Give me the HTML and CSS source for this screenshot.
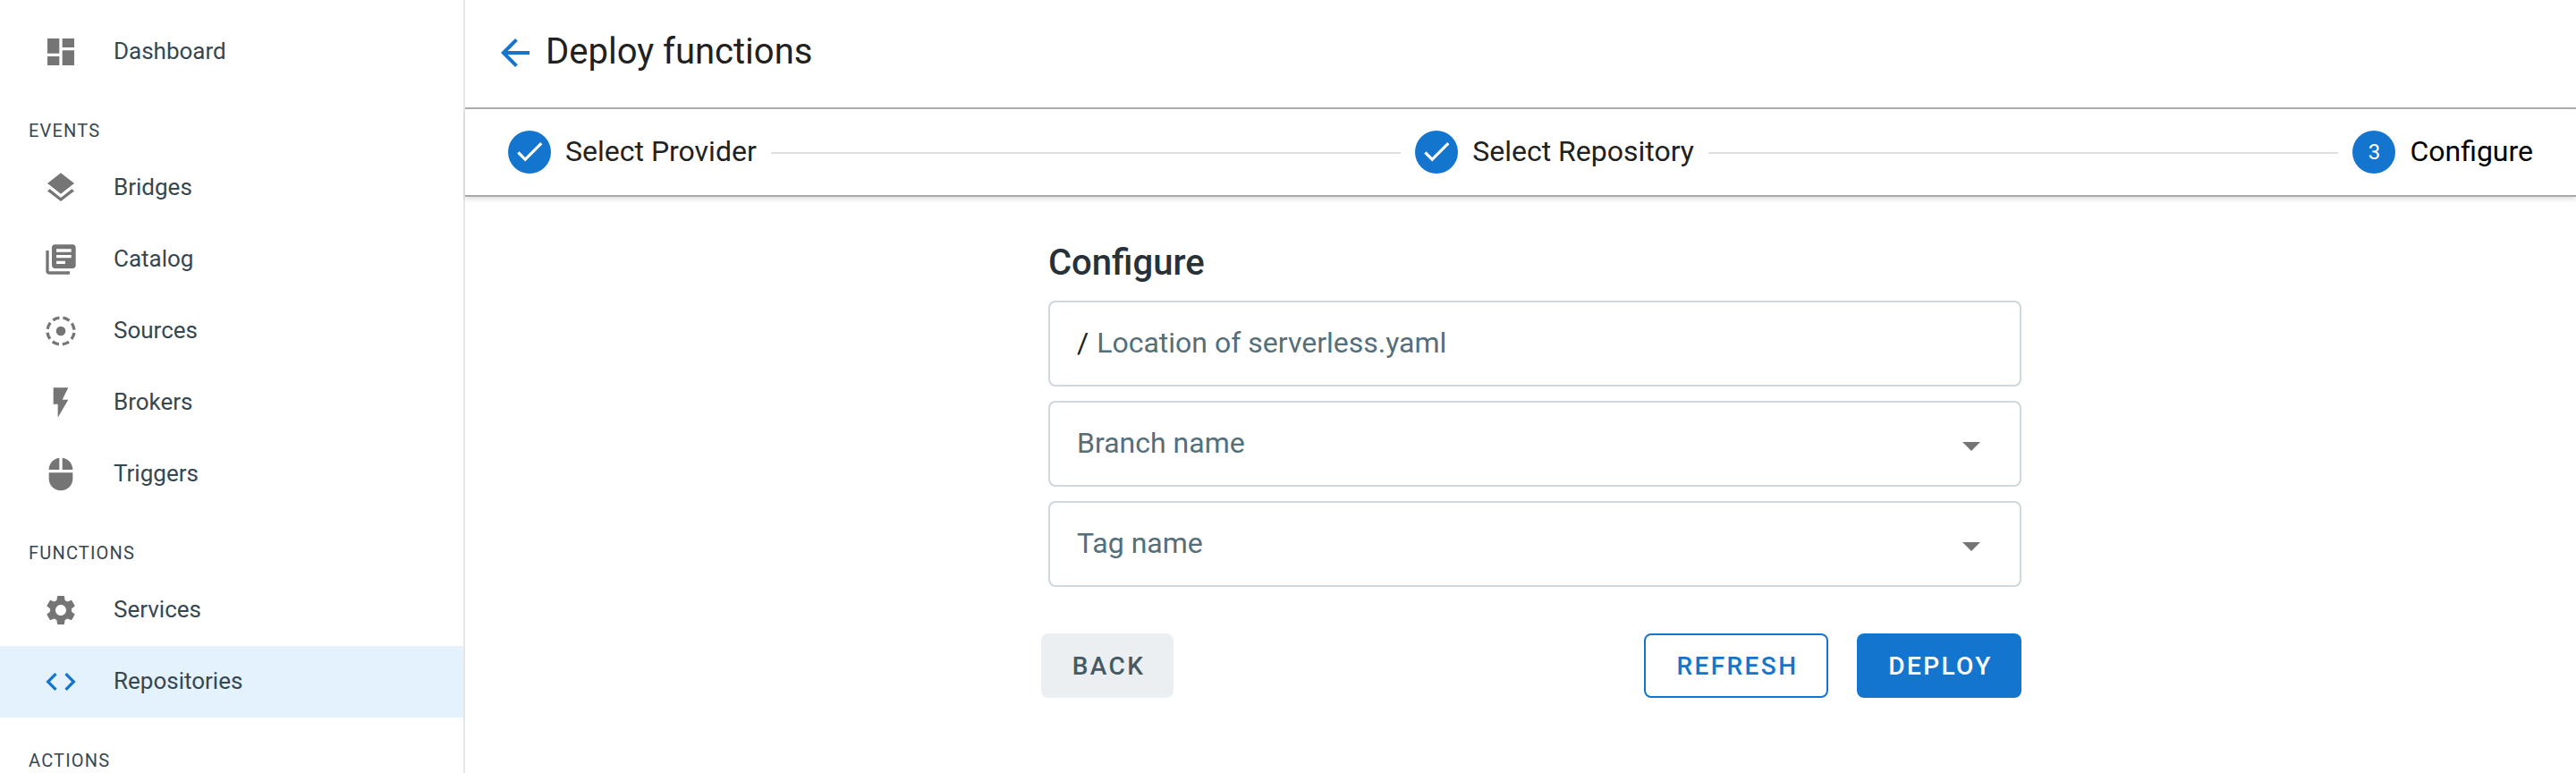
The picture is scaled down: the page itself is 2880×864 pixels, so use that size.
FILE: index.html
```html
<!DOCTYPE html>
<html lang="en">
<head>
  <meta charset="UTF-8">
  <title>Deploy functions</title>
  <link rel="stylesheet" href="styles.css">
</head>
<body>
  <aside class="sidebar">
    <nav>
      <a class="nav-item">
        <svg class="nav-icon" viewBox="0 0 24 24"><path d="M3 13h8V3H3v10zm0 8h8v-6H3v6zm10 0h8V11h-8v10zm0-18v6h8V3h-8z"/></svg>
        <span>Dashboard</span>
      </a>
      <div class="nav-heading">EVENTS</div>
      <a class="nav-item">
        <svg class="nav-icon" viewBox="0 0 24 24"><path d="M11.99 18.54l-7.37-5.73L3 14.07l9 7 9-7-1.63-1.27-7.38 5.74zM12 16l7.36-5.73L21 9l-9-7-9 7 1.63 1.27L12 16z"/></svg>
        <span>Bridges</span>
      </a>
      <a class="nav-item">
        <svg class="nav-icon" viewBox="0 0 24 24"><path d="M4 6H2v14c0 1.1.9 2 2 2h14v-2H4V6zm16-4H8c-1.1 0-2 .9-2 2v12c0 1.1.9 2 2 2h12c1.1 0 2-.9 2-2V4c0-1.1-.9-2-2-2zm-1 9H9V9h10v2zm-4 4H9v-2h6v2zm4-8H9V5h10v2z"/></svg>
        <span>Catalog</span>
      </a>
      <a class="nav-item">
        <svg class="nav-icon" viewBox="0 0 24 24"><circle class="dashed" cx="12" cy="12" r="9"/><circle cx="12" cy="12" r="3.2"/></svg>
        <span>Sources</span>
      </a>
      <a class="nav-item">
        <svg class="nav-icon" viewBox="0 0 24 24"><path d="M7 2v11h3v9l7-12h-4l4-8z"/></svg>
        <span>Brokers</span>
      </a>
      <a class="nav-item">
        <svg class="nav-icon" viewBox="0 0 24 24"><path d="M13 1.07V9h7c0-4.08-3.05-7.44-7-7.93zM4 15c0 4.42 3.58 8 8 8s8-3.58 8-8v-4H4v4zm7-13.93C7.05 1.56 4 4.92 4 9h7V1.07z"/></svg>
        <span>Triggers</span>
      </a>
      <div class="nav-heading">FUNCTIONS</div>
      <a class="nav-item">
        <svg class="nav-icon" viewBox="0 0 24 24"><path d="M19.14 12.94c.04-.3.06-.61.06-.94 0-.32-.02-.64-.07-.94l2.03-1.58c.18-.14.23-.41.12-.61l-1.92-3.32c-.12-.22-.37-.29-.59-.22l-2.39.96c-.5-.38-1.03-.7-1.62-.94l-.36-2.54c-.04-.24-.24-.41-.48-.41h-3.84c-.24 0-.43.17-.47.41l-.36 2.54c-.59.24-1.13.57-1.62.94l-2.39-.96c-.22-.08-.47 0-.59.22L2.74 8.87c-.12.21-.08.47.12.61l2.03 1.58c-.05.3-.09.63-.09.94s.02.64.07.94l-2.03 1.58c-.18.14-.23.41-.12.61l1.92 3.32c.12.22.37.29.59.22l2.39-.96c.5.38 1.03.7 1.62.94l.36 2.54c.05.24.24.41.48.41h3.84c.24 0 .44-.17.47-.41l.36-2.54c.59-.24 1.13-.56 1.62-.94l2.39.96c.22.08.47 0 .59-.22l1.92-3.32c.12-.22.07-.47-.12-.61l-2.01-1.58zM12 15.6c-1.98 0-3.6-1.62-3.6-3.6s1.62-3.6 3.6-3.6 3.6 1.62 3.6 3.6-1.62 3.6-3.6 3.6z"/></svg>
        <span>Services</span>
      </a>
      <a class="nav-item active">
        <svg class="nav-icon" viewBox="0 0 24 24"><path d="M9.4 16.6L4.8 12l4.6-4.6L8 6l-6 6 6 6 1.4-1.4zm5.2 0l4.6-4.6-4.6-4.6L16 6l6 6-6 6-1.4-1.4z"/></svg>
        <span>Repositories</span>
      </a>
      <div class="nav-heading">ACTIONS</div>
    </nav>
  </aside>

  <main class="main">
    <header class="topbar">
      <svg class="back-arrow" viewBox="0 0 24 24"><path d="M20 11H7.83l5.59-5.59L12 4l-8 8 8 8 1.41-1.41L7.83 13H20v-2z"/></svg>
      <h1>Deploy functions</h1>
    </header>

    <div class="stepper">
      <div class="step">
        <svg class="step-check" viewBox="0 0 24 24"><circle cx="12" cy="12" r="12"/><path class="tick" d="M9.6 15.34L6.26 12l-1.13 1.13 4.47 4.47 9.6-9.6-1.13-1.13z" transform="translate(0 -0.4)"/></svg>
        <span>Select Provider</span>
      </div>
      <div class="step-line"></div>
      <div class="step">
        <svg class="step-check" viewBox="0 0 24 24"><circle cx="12" cy="12" r="12"/><path class="tick" d="M9.6 15.34L6.26 12l-1.13 1.13 4.47 4.47 9.6-9.6-1.13-1.13z" transform="translate(0 -0.4)"/></svg>
        <span>Select Repository</span>
      </div>
      <div class="step-line"></div>
      <div class="step current">
        <div class="step-number">3</div>
        <span>Configure</span>
      </div>
    </div>

    <section class="content">
      <form class="config-form" onsubmit="return false;">
        <h2>Configure</h2>
        <label class="field">
          <span class="prefix">/</span>
          <input type="text" placeholder="Location of serverless.yaml">
        </label>
        <div class="field">
          <span class="select-label">Branch name</span>
          <svg class="drop-arrow" viewBox="0 0 24 24"><path d="M7 10l5 5 5-5z"/></svg>
        </div>
        <div class="field">
          <span class="select-label">Tag name</span>
          <svg class="drop-arrow" viewBox="0 0 24 24"><path d="M7 10l5 5 5-5z"/></svg>
        </div>
        <div class="actions">
          <button type="button" class="btn btn-back">BACK</button>
          <button type="button" class="btn btn-outline">REFRESH</button>
          <button type="submit" class="btn btn-primary">DEPLOY</button>
        </div>
      </form>
    </section>
  </main>
</body>
</html>
```

FILE: styles.css
```css
* { box-sizing: border-box; }
html, body { height: 100%; }
body { margin: 0; display: flex; height: 864px; overflow: hidden; background-color: #fff; font-family: Roboto, "Liberation Sans", sans-serif; }

/* sidebar */
.sidebar { width: 520px; flex: none; padding-top: 18px; border-right: 2px solid #e3e6e8; overflow: hidden; }
.nav-item { display: flex; align-items: center; height: 80px; padding-left: 48px; font-size: 26px; color: #37474f; }
.nav-item span { margin: 0 0 2px 39px; }
.nav-icon { width: 40px; height: 40px; fill: #757575; flex: none; }
.nav-item.active { background-color: #e3f2fd; }
.nav-item.active .nav-icon { fill: #1475cf; }
.dashed { fill: none; stroke: #757575; stroke-width: 2; stroke-dasharray: 4.6 2.47; stroke-dashoffset: -1.23; }
.nav-heading { height: 72px; padding: 36px 0 0 32px; font-size: 20px; line-height: 24px; letter-spacing: 1.2px; color: #37474f; }

/* top bar and stepper */
.main { flex: 1; min-width: 0; }
.topbar { display: flex; align-items: center; height: 122px; padding: 0 0 2px 32px; border-bottom: 2px solid #aeaeae; }
.back-arrow { width: 48px; height: 48px; fill: #1475cf; flex: none; }
.topbar h1 { margin: 0 0 4px 10px; font-size: 40px; font-weight: 400; color: #212121; }
.stepper { display: flex; align-items: center; height: 98px; padding: 0 48px; border-bottom: 2px solid #a8a8a8; box-shadow: 0 3px 5px rgba(0,0,0,0.12); }
.step { display: flex; align-items: center; flex: none; font-size: 32px; color: #212121; }
.step span { margin: 0 0 2px 16px; }
.step.current { color: #000; }
.step-check { width: 48px; height: 48px; flex: none; fill: #1475cf; }
.tick { fill: #fff; }
.step-number { display: flex; align-items: center; justify-content: center; width: 48px; height: 48px; border-radius: 50%; background-color: #1475cf; color: #fff; font-size: 24px; }
.step-line { flex: 1; height: 2px; margin: 2px 16px 0; background-color: #dfdfdf; }

/* form */
.content { display: flex; justify-content: center; padding-left: 24px; }
.config-form { width: 1096px; }
.config-form h2 { margin: 0 0 0 8px; padding-top: 44px; font-size: 40px; line-height: 60px; height: 116px; font-weight: 500; color: #263238; }
.field { display: flex; align-items: center; height: 96px; margin: 0 0 16px 8px; padding: 0 30px; border: 2px solid #cfd8dc; border-radius: 8px; font-size: 32px; color: #546e7a; }
.prefix { color: #212121; margin: 0 9px 3px 0; }
.field input { flex: 1; border: none; outline: none; padding: 0; margin-bottom: 3px; font: inherit; color: #212121; }
.field input::placeholder { color: #546e7a; opacity: 1; }
.select-label { flex: 1; margin-bottom: 3px; }
.drop-arrow { width: 48px; height: 48px; margin-top: 4px; fill: #757575; flex: none; }
.actions { display: flex; align-items: center; margin-top: 52px; }
.btn { height: 72px; padding: 0 0 0 3px; border: 2px solid transparent; border-radius: 8px; font-family: inherit; font-size: 28px; font-weight: 500; letter-spacing: 2.4px; }
.btn-back { width: 148px; background-color: #eceff1; color: #455a64; margin-right: auto; }
.btn-outline { width: 206px; background-color: #fff; border-color: #1475cf; color: #1475cf; margin-right: 32px; }
.btn-primary { width: 184px; background-color: #1475cf; color: #fff; }
```
